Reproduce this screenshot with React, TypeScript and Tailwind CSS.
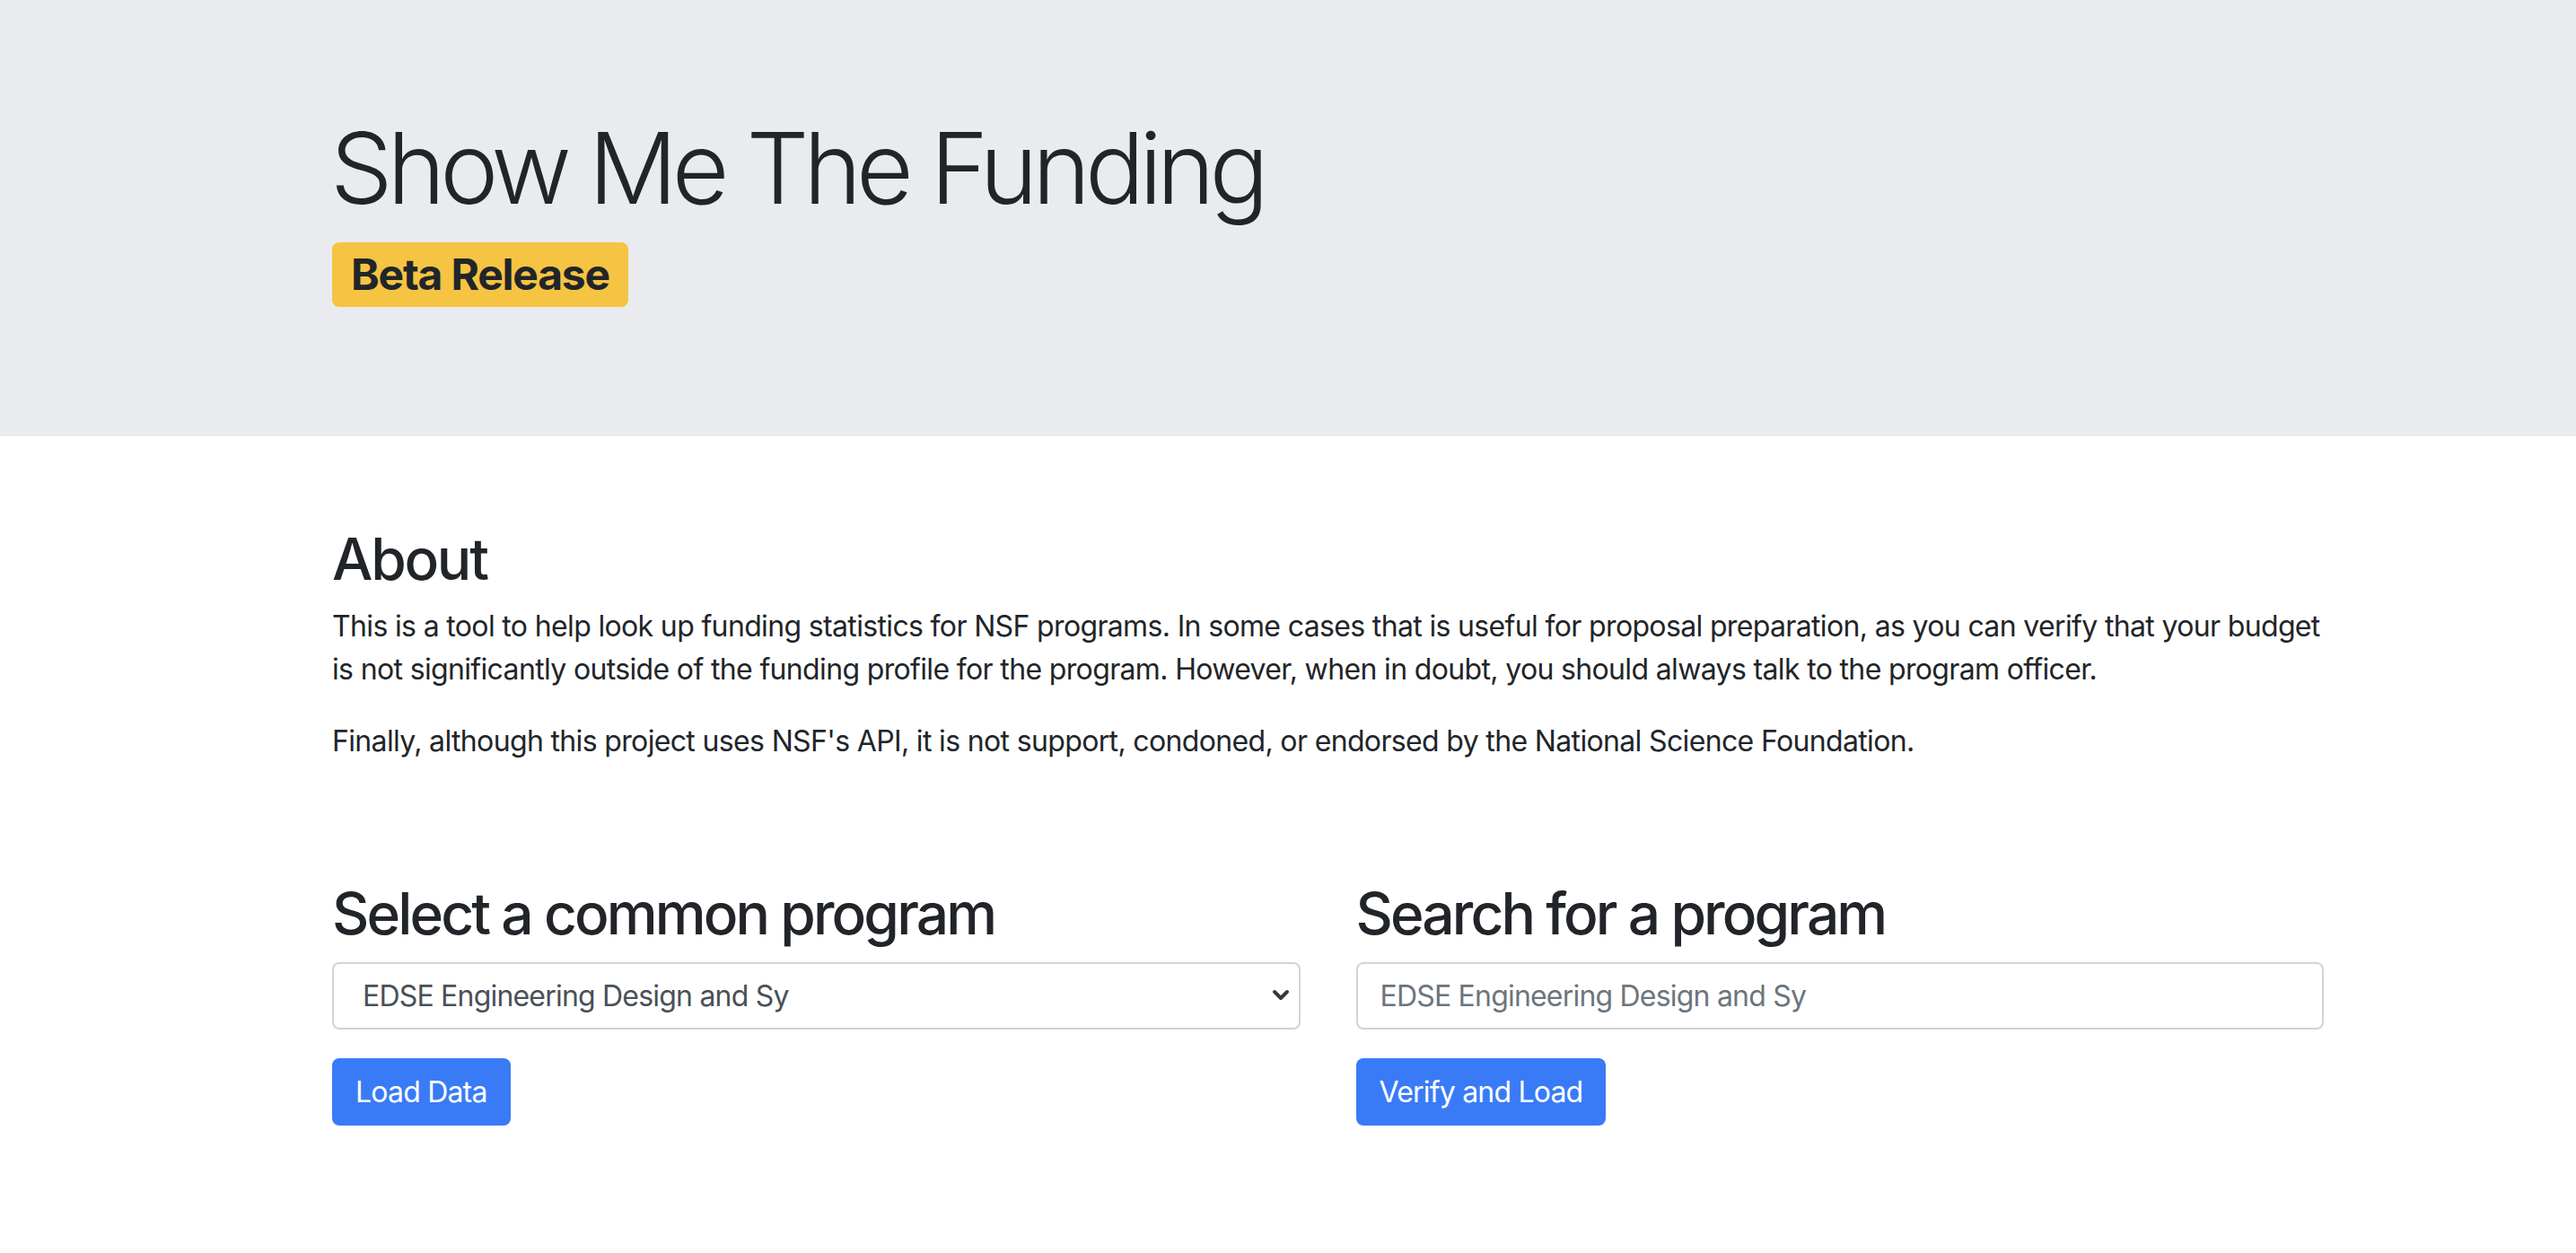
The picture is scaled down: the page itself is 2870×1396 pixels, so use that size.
import { useState } from 'react'

const programs = [
  'EDSE Engineering Design and Sy',
  'CMMI Civil, Mechanical and Manufacturing Innovation',
  'ECCS Electrical, Communications and Cyber Systems',
  'CBET Chemical, Bioengineering, Environmental and Transport Systems',
]

export default function App() {
  const [program, setProgram] = useState(programs[0])
  const [query, setQuery] = useState('')

  return (
    <div className="min-h-screen bg-white text-[#212529]"
         style={{ fontFamily: 'Inter, "Noto Sans", "Liberation Sans", sans-serif' }}>
      <header className="bg-[#eaebef] pt-[120px] pb-[144px]">
        <div className="ml-[370px] w-[2219px]">
          <h1 className="text-[110px] leading-[134px] font-light tracking-[-0.055em] -ml-[2px]">Show Me The Funding</h1>
          <div className="mt-[16px] flex">
            <span className="rounded-[8px] bg-[#f5c443] px-[21px] h-[72px] flex items-center text-[48px] font-bold leading-none tracking-[-0.025em]">
              Beta Release
            </span>
          </div>
        </div>
      </header>

      <main className="ml-[370px] w-[2219px]">
        <section className="pt-[98px] tracking-[-0.65px]">
          <h2 className="text-[64px] leading-[77px] font-medium mb-[13px] tracking-[-0.035em]">About</h2>
          <p className="text-[32px] leading-[48px] mb-[32px]">
            This is a tool to help look up funding statistics for NSF programs. In some cases that is useful for
            proposal preparation, as you can verify that your budget is not significantly outside of the funding
            profile for the program. However, when in doubt, you should always talk to the program officer.
          </p>
          <p className="text-[32px] leading-[48px] mb-[32px]">
            Finally, although this project uses NSF's API, it is not support, condoned, or endorsed by the National
            Science Foundation.
          </p>
        </section>

        <section className="grid grid-cols-2 gap-[62px] pt-[97px] tracking-[-0.8px]">
          <div>
            <h2 className="text-[64px] leading-[77px] font-medium mb-[16px] tracking-[-0.045em]">Select a common program</h2>
            <div className="relative">
              <select
                value={program}
                onChange={e => setProgram(e.target.value)}
                className="w-full h-[75px] appearance-none rounded-[8px] border-2 border-[#ced4da] bg-white pl-[32px] pr-[60px] text-[32px] text-[#495057] tracking-[-0.8px] outline-none"
              >
                {programs.map(p => <option key={p} value={p}>{p}</option>)}
              </select>
              <svg className="pointer-events-none absolute right-[12px] top-[30px]" width="20" height="14" viewBox="0 0 20 14">
                <path d="M3 3 L10 10 L17 3" fill="none" stroke="#343a40" strokeWidth="4" strokeLinecap="round" strokeLinejoin="round" />
              </svg>
            </div>
            <button className="mt-[32px] h-[75px] rounded-[8px] bg-[#397bf6] px-[26px] text-[32px] text-white tracking-[-0.8px]">
              Load Data
            </button>
          </div>
          <div>
            <h2 className="text-[64px] leading-[77px] font-medium mb-[16px] tracking-[-0.045em]">Search for a program</h2>
            <input
              value={query}
              onChange={e => setQuery(e.target.value)}
              placeholder="EDSE Engineering Design and Sy"
              className="w-full h-[75px] rounded-[8px] border-2 border-[#ced4da] bg-white px-[25px] text-[32px] text-[#495057] tracking-[-0.8px] placeholder:text-[#6c757d] outline-none"
            />
            <button className="mt-[32px] h-[75px] rounded-[8px] bg-[#397bf6] px-[26px] text-[32px] text-white tracking-[-0.8px]">
              Verify and Load
            </button>
          </div>
        </section>
      </main>
    </div>
  )
}
